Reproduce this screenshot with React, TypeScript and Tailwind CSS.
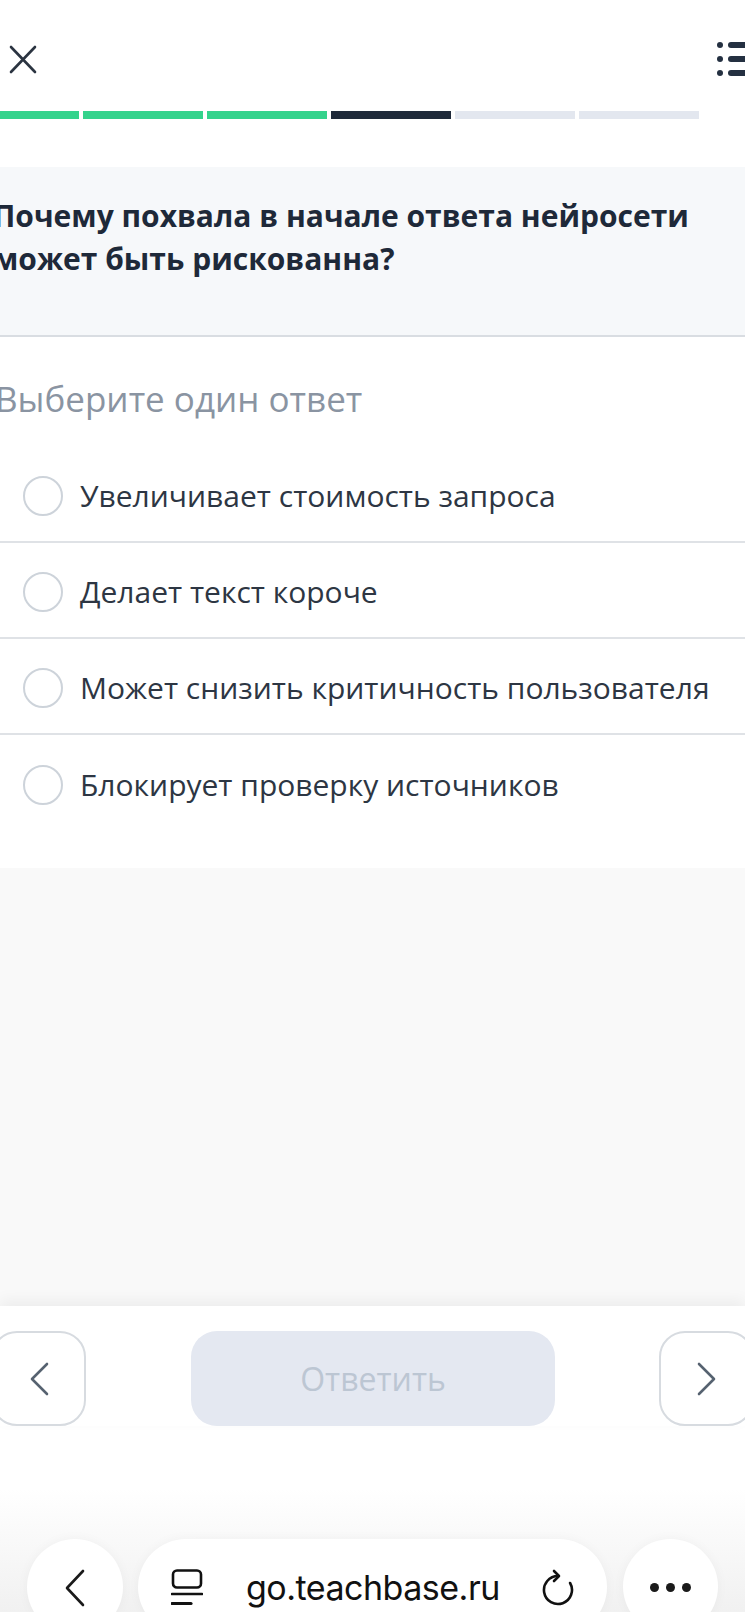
import React from 'react';

const options = [
  'Увеличивает стоимость запроса',
  'Делает текст короче',
  'Может снизить критичность пользователя',
  'Блокирует проверку источников',
];

const progress = ['bg-[#34d38c]', 'bg-[#34d38c]', 'bg-[#34d38c]', 'bg-[#1f2a3a]', 'bg-[#e3e7ef]', 'bg-[#e3e7ef]'];

function Chevron({ dir, className }: { dir: 'left' | 'right'; className?: string }) {
  return (
    <svg width="20" height="34" viewBox="0 0 20 34" fill="none" className={className}>
      <path
        d={dir === 'left' ? 'M18 2 L3 17 L18 32' : 'M2 2 L17 17 L2 32'}
        stroke="currentColor"
        strokeWidth="2.6"
        strokeLinecap="round"
        strokeLinejoin="round"
      />
    </svg>
  );
}

export default function App() {
  return (
    <div className="relative w-[745px] h-[1612px] overflow-hidden bg-white flex flex-col font-['Open_Sans',sans-serif]">
      {/* Header */}
      <div className="h-[111px] pt-[7px] flex items-center justify-between shrink-0">
        <svg width="28" height="29" viewBox="0 0 28 29" className="ml-[9px] text-[#2b3441]">
          <path d="M2 2 L26 27 M26 2 L2 27" stroke="currentColor" strokeWidth="2.6" strokeLinecap="round" />
        </svg>
        <svg width="36" height="36" viewBox="0 0 36 36" className="mr-[-8px] text-[#243041]">
          <circle cx="3" cy="4" r="3" fill="currentColor" />
          <circle cx="3" cy="18" r="3" fill="currentColor" />
          <circle cx="3" cy="32" r="3" fill="currentColor" />
          <rect x="11" y="1" width="25" height="6" rx="3" fill="currentColor" />
          <rect x="11" y="15" width="25" height="6" rx="3" fill="currentColor" />
          <rect x="11" y="29" width="25" height="6" rx="3" fill="currentColor" />
        </svg>
      </div>

      {/* Progress */}
      <div className="flex gap-[4px] ml-[-41px] h-[8px] shrink-0">
        {progress.map((c, i) => (
          <div key={i} className={`w-[120px] h-full shrink-0 ${c}`} />
        ))}
      </div>

      {/* Question */}
      <div className="mt-[48px] bg-[#f6f8fa] border-b-2 border-[#d9dde2] pt-[27px] pb-[55px] shrink-0">
        <h1 className="ml-[-7px] text-[30px] leading-[43px] font-bold text-[#1e2939] whitespace-nowrap">
          Почему похвала в начале ответа нейросети
          <br />
          может быть рискованна?
        </h1>
      </div>

      <p className="ml-[-5px] pt-[42px] pb-[28px] text-[35px] leading-[40px] text-[#8a94a2] shrink-0">
        Выберите один ответ
      </p>

      {/* Options */}
      <div className="pb-[37px] shrink-0">
        {options.map((o, i) => (
          <div
            key={o}
            className={`h-[96px] pt-[4px] flex items-center gap-[17px] pl-[23px] ${i < options.length - 1 ? 'border-b-2 border-[#dfe2e6]' : ''}`}
          >
            <span className="w-[40px] h-[40px] rounded-full border-2 border-[#cdd3da] shrink-0" />
            <span className="text-[30px] leading-[40px] text-[#2d3643] whitespace-nowrap">{o}</span>
          </div>
        ))}
      </div>

      {/* Empty area */}
      <div className="h-[438px] bg-[#f9f9f9] shrink-0" />

      {/* Bottom actions */}
      <div className="relative bg-white pt-[25px] shadow-[0_-6px_14px_rgba(0,0,0,0.05)] shrink-0">
        <div className="flex items-center ml-[-9px]">
          <button className="shrink-0 w-[95px] h-[95px] rounded-[26px] border-2 border-[#d7dbe0] flex items-center justify-center text-[#566270]">
            <Chevron dir="left" />
          </button>
          <button className="shrink-0 ml-[105px] w-[364px] h-[95px] rounded-[26px] bg-[#e4e8f1] text-[32px] text-[#bcc6d3]">
            Ответить
          </button>
          <button className="shrink-0 ml-[104px] w-[95px] h-[95px] rounded-[26px] border-2 border-[#d7dbe0] flex items-center justify-center text-[#566270]">
            <Chevron dir="right" />
          </button>
        </div>
      </div>

      {/* Browser chrome */}
      <div className="flex-1 bg-[linear-gradient(to_bottom,#ffffff_0%,#ffffff_30%,#eeeeee_100%)] pt-[113px] flex items-start font-['Inter',sans-serif]">
        <div className="shrink-0 ml-[27px] w-[96px] h-[96px] rounded-full bg-white shadow-[0_0_12px_rgba(0,0,0,0.04)] flex justify-center pt-[30px] text-[#1a1a1a]">
          <svg width="22" height="38" viewBox="0 0 22 38" fill="none">
            <path d="M19 2 L3 19 L19 36" stroke="currentColor" strokeWidth="2.6" strokeLinecap="round" strokeLinejoin="round" />
          </svg>
        </div>
        <div className="shrink-0 ml-[15px] w-[469px] h-[96px] rounded-[48px] bg-white shadow-[0_0_12px_rgba(0,0,0,0.04)] flex items-start pt-[29px] pl-[33px] text-[#111]">
          <svg width="32" height="38" viewBox="0 0 32 38" fill="none" className="mt-[1px] shrink-0">
            <rect x="2" y="1.5" width="28" height="17" rx="4" stroke="currentColor" strokeWidth="2.6" />
            <path d="M1 25 H31" stroke="currentColor" strokeWidth="2.6" strokeLinecap="round" />
            <path d="M1 34.5 H20" stroke="currentColor" strokeWidth="3.2" strokeLinecap="round" />
          </svg>
          <span className="ml-[43px] text-[34px] leading-[40px] tracking-[-0.5px] whitespace-nowrap">go.teachbase.ru</span>
          <svg width="34" height="40" viewBox="0 0 34 40" fill="none" className="ml-[42px] shrink-0">
            <path d="M28.1 15 A 14 14 0 1 1 16 8" stroke="currentColor" strokeWidth="2.6" strokeLinecap="round" />
            <path d="M12 3 L17 8 L12 13" stroke="currentColor" strokeWidth="2.6" strokeLinecap="round" strokeLinejoin="round" />
          </svg>
        </div>
        <div className="shrink-0 ml-[16px] w-[95px] h-[95px] rounded-full bg-white shadow-[0_0_12px_rgba(0,0,0,0.04)] flex justify-center gap-[7px] pt-[44px]">
          <span className="w-[9px] h-[9px] rounded-full bg-[#1a1a1a]" />
          <span className="w-[9px] h-[9px] rounded-full bg-[#1a1a1a]" />
          <span className="w-[9px] h-[9px] rounded-full bg-[#1a1a1a]" />
        </div>
      </div>
    </div>
  );
}
